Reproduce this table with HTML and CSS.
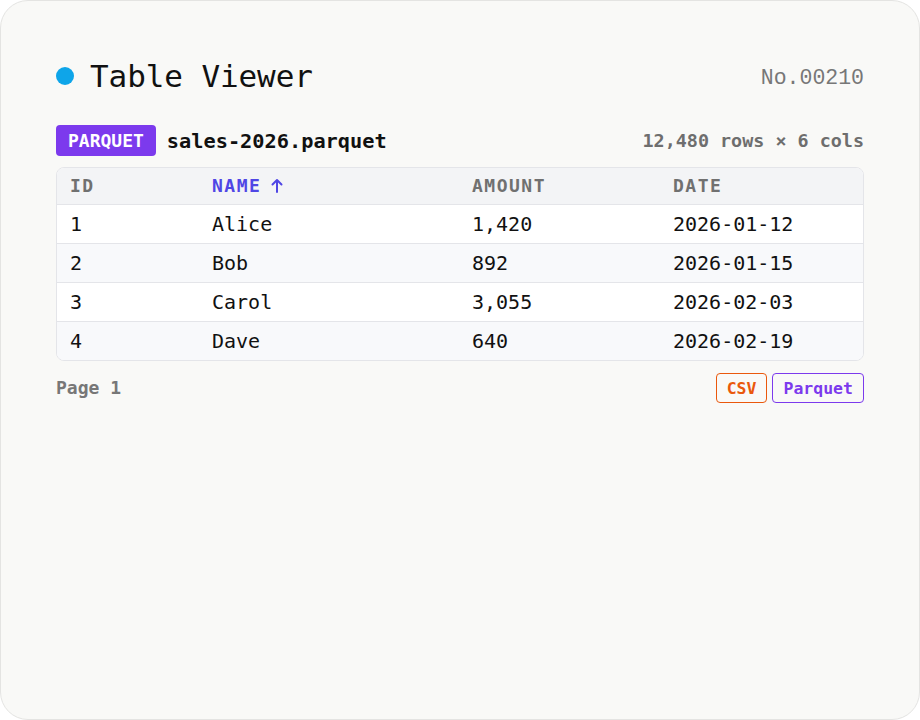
FILE: index.html
```html
<!DOCTYPE html>
<html>
<head>
<meta charset="utf-8">
<link rel="stylesheet" href="styles.css">
</head>
<body>
<div class="card">
  <header class="top">
    <div class="title-wrap">
      <span class="dot"></span>
      <h1 class="title">Table Viewer</h1>
    </div>
    <span class="serial">No.00210</span>
  </header>

  <div class="file-row">
    <div class="file-left">
      <span class="badge">PARQUET</span>
      <span class="filename">sales-2026.parquet</span>
    </div>
    <span class="meta">12,480 rows × 6 cols</span>
  </div>

  <div class="table">
    <div class="row head">
      <div class="cell">ID</div>
      <div class="cell sorted">NAME <svg class="arrow" width="12" height="15" viewBox="0 0 12 15"><path d="M6 14V2M1.5 6.5L6 2l4.5 4.5" fill="none" stroke="currentColor" stroke-width="2" stroke-linecap="round" stroke-linejoin="round"/></svg></div>
      <div class="cell">AMOUNT</div>
      <div class="cell">DATE</div>
    </div>
    <div class="row">
      <div class="cell">1</div><div class="cell">Alice</div><div class="cell">1,420</div><div class="cell">2026-01-12</div>
    </div>
    <div class="row alt">
      <div class="cell">2</div><div class="cell">Bob</div><div class="cell">892</div><div class="cell">2026-01-15</div>
    </div>
    <div class="row">
      <div class="cell">3</div><div class="cell">Carol</div><div class="cell">3,055</div><div class="cell">2026-02-03</div>
    </div>
    <div class="row alt last">
      <div class="cell">4</div><div class="cell">Dave</div><div class="cell">640</div><div class="cell">2026-02-19</div>
    </div>
  </div>

  <div class="footer">
    <span class="page">Page 1</span>
    <div class="exports">
      <button class="btn csv">CSV</button>
      <button class="btn pq">Parquet</button>
    </div>
  </div>
</div>
</body>
</html>
```

FILE: styles.css
```css
html, body {
  margin: 0;
  padding: 0;
  background: #ffffff;
}
body {
  font-family: "DejaVu Sans Mono", "Liberation Mono", monospace;
  color: #111111;
}
.card {
  box-sizing: border-box;
  width: 920px;
  height: 720px;
  border: 1px solid #e4e4e2;
  border-radius: 28px;
  background: #f9f9f7;
  padding: 55px 55px;
}
.top {
  display: flex;
  align-items: center;
  justify-content: space-between;
  height: 40px;
}
.title-wrap {
  display: flex;
  align-items: center;
  gap: 16px;
}
.dot {
  width: 18px;
  height: 18px;
  border-radius: 50%;
  background: #0ea5e9;
}
.title {
  margin: 0;
  font-size: 31px;
  font-weight: 400;
  letter-spacing: -0.1px;
  color: #111111;
}
.serial {
  font-family: "Liberation Mono", monospace;
  font-size: 21.5px;
  color: #777777;
  margin-top: 4px;
}
.file-row {
  display: flex;
  align-items: center;
  justify-content: space-between;
  margin-top: 29px;
  height: 31px;
}
.file-left {
  display: flex;
  align-items: center;
  gap: 11px;
}
.badge {
  background: #7c3aed;
  color: #ffffff;
  font-weight: 700;
  font-size: 18px;
  height: 31px;
  line-height: 31px;
  padding: 0 12px;
  border-radius: 4px;
}
.filename {
  font-weight: 700;
  font-size: 20.3px;
  color: #111111;
}
.meta {
  font-size: 18.4px;
  font-weight: 700;
  color: #6e6e6e;
}
.table {
  margin-top: 11px;
  border: 1px solid #e4e5e9;
  border-radius: 8px;
  overflow: hidden;
  background: #ffffff;
}
.row {
  display: grid;
  grid-template-columns: 142px 260px 201px 1fr;
  height: 38px;
  align-items: center;
  border-bottom: 1px solid #e4e5e9;
  background: #ffffff;
  font-size: 20px;
  color: #111111;
}
.row.alt {
  background: #f8f9fb;
}
.row.last {
  border-bottom: none;
}
.row.head {
  box-sizing: border-box;
  height: 37px;
  padding-bottom: 2px;
  background: #f3f4f6;
  font-size: 18px;
  font-weight: 700;
  color: #707070;
  letter-spacing: 1.5px;
}
.cell {
  padding-left: 13px;
  white-space: nowrap;
}
.cell.sorted {
  color: #4f46e5;
  display: flex;
  align-items: center;
}
.arrow {
  margin-left: 10px;
}
.footer {
  display: flex;
  align-items: center;
  justify-content: space-between;
  margin-top: 12px;
}
.page {
  font-size: 18px;
  font-weight: 700;
  color: #777777;
  margin-top: -2px;
}
.exports {
  display: flex;
  gap: 5px;
}
.btn {
  font-family: "DejaVu Sans Mono", monospace;
  font-size: 16.5px;
  font-weight: 700;
  background: transparent;
  height: 30px;
  padding: 0 10px;
  border-radius: 4px;
  border: 1px solid;
  cursor: pointer;
}
.btn.csv {
  color: #ea580c;
  border-color: #ea580c;
}
.btn.pq {
  color: #7c3aed;
  border-color: #7c3aed;
}
```
